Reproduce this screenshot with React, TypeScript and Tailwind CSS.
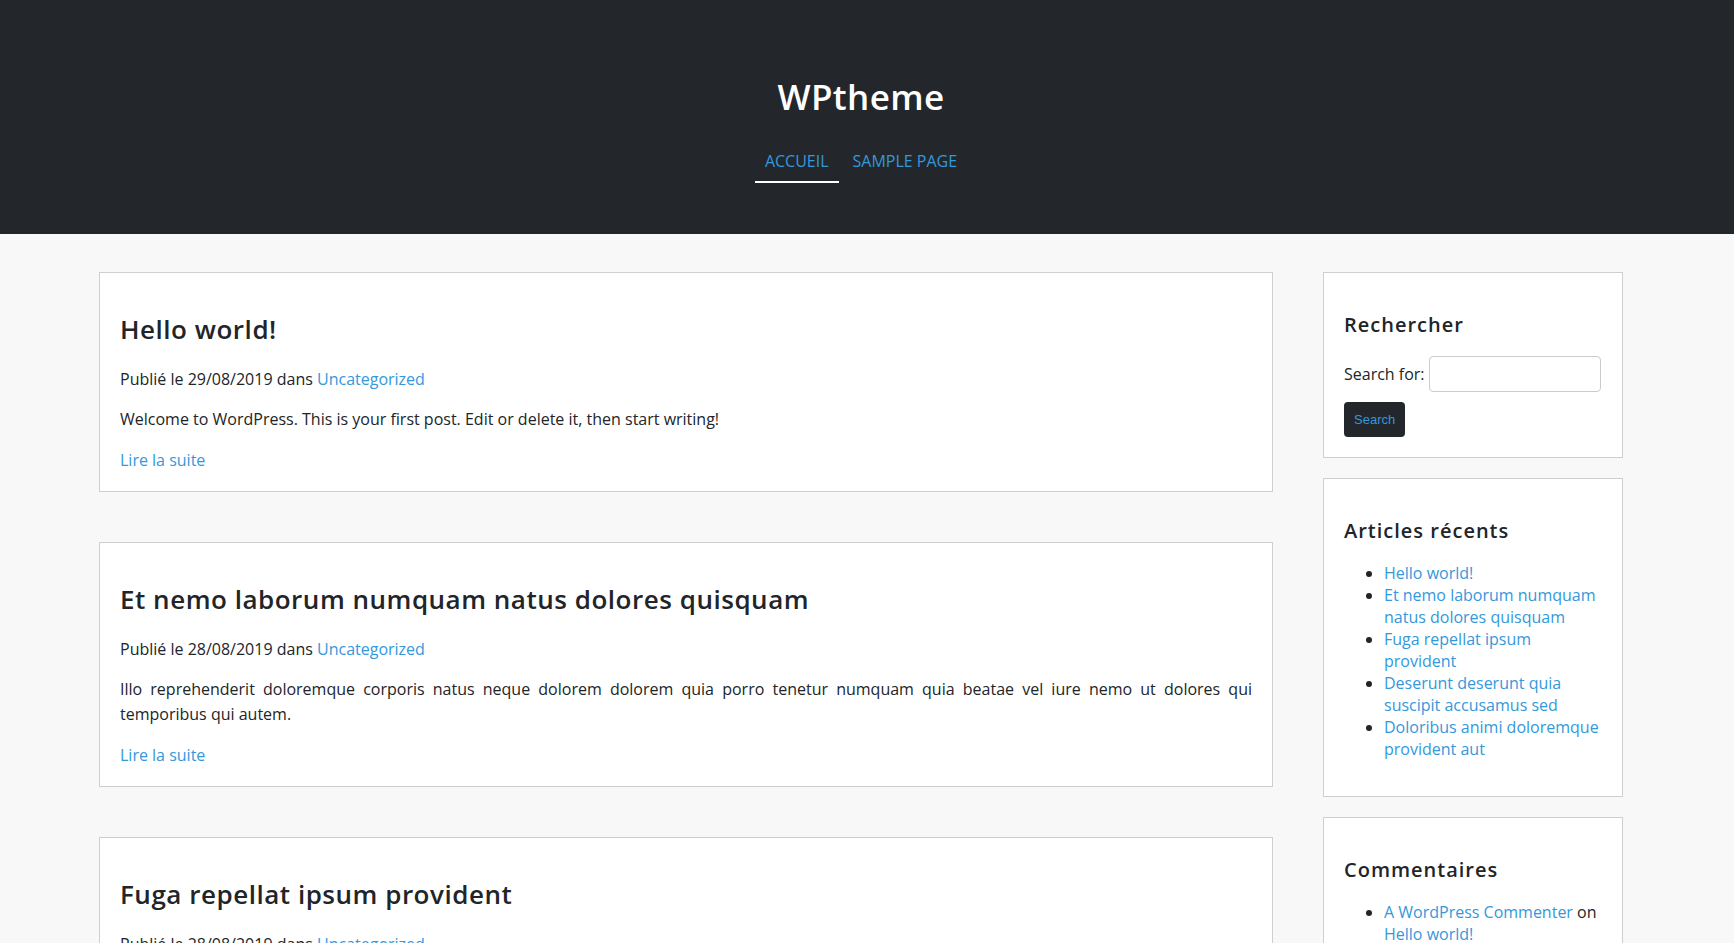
import React from "react";

type Post = {
  title: string;
  date: string;
  excerpt: string;
};

const posts: Post[] = [
  {
    title: "Hello world!",
    date: "29/08/2019",
    excerpt:
      "Welcome to WordPress. This is your first post. Edit or delete it, then start writing!",
  },
  {
    title: "Et nemo laborum numquam natus dolores quisquam",
    date: "28/08/2019",
    excerpt:
      "Illo reprehenderit doloremque corporis natus neque dolorem dolorem quia porro tenetur numquam quia beatae vel iure nemo ut dolores qui temporibus qui autem.",
  },
  {
    title: "Fuga repellat ipsum provident",
    date: "28/08/2019",
    excerpt:
      "Quae et aut rerum nobis saepe quia voluptatem. Ipsa eos sit eum ut aut est quia laboriosam.",
  },
];

const recent = [
  "Hello world!",
  "Et nemo laborum numquam natus dolores quisquam",
  "Fuga repellat ipsum provident",
  "Deserunt deserunt quia suscipit accusamus sed",
  "Doloribus animi doloremque provident aut",
];

const PostCard = ({ post }: { post: Post }) => {
  return (
    <article className="mb-[50px] border border-[#cfcfcf] bg-white px-5 pt-5 pb-[19px]">
      <h2 className="mt-[21px] mb-[22px] text-[26px] leading-[31px] font-semibold tracking-[0.02em] text-[#212529]">
        {post.title}
      </h2>
      <p className="mb-4">
        Publié le {post.date} dans{" "}
        <a href="#" className="text-[#3498db]">
          Uncategorized
        </a>
      </p>
      <p className="mb-4 text-justify leading-[25px]">{post.excerpt}</p>
      <p>
        <a href="#" className="text-[#3498db]">
          Lire la suite
        </a>
      </p>
    </article>
  );
};

const Widget = ({
  title,
  children,
}: {
  title: string;
  children: React.ReactNode;
}) => {
  return (
    <section className="mb-5 border border-[#cfcfcf] bg-white p-5">
      <h3 className="mt-5 mb-[19px] text-[20px] leading-6 font-semibold tracking-[0.05em] text-[#212529]">
        {title}
      </h3>
      {children}
    </section>
  );
};

const App = () => {
  return (
    <div className="min-h-screen bg-[#f8f8f8] font-['Open_Sans',sans-serif] text-base leading-6 text-[#212529]">
      <header className="bg-[#23272b]">
        <div className="flex w-[1722px] flex-col items-center pt-[75px] pb-[51px]">
          <h1 className="text-[35px] leading-[43px] font-semibold tracking-[0.01em] text-white">
            WPtheme
          </h1>
          <nav className="mt-[23px] flex gap-1">
            <a
              href="#"
              className="border-b-2 border-white px-[10px] pt-2 pb-2 text-[#3498db]"
            >
              ACCUEIL
            </a>
            <a
              href="#"
              className="border-b-2 border-transparent px-[10px] pt-2 pb-2 text-[#3498db]"
            >
              SAMPLE PAGE
            </a>
          </nav>
        </div>
      </header>

      <div className="ml-[99px] flex w-[1524px] gap-[50px] pt-[38px]">
        <main className="w-[1174px]">
          {posts.map((post) => (
            <PostCard key={post.title} post={post} />
          ))}
        </main>

        <aside className="w-[300px]">
          <Widget title="Rechercher">
            <form className="flex items-center gap-1">
              <label htmlFor="s">Search for:</label>
              <input
                id="s"
                type="text"
                className="h-9 w-[172px] rounded border border-[#cccccc] bg-white px-2"
              />
            </form>
            <button className="mt-[10px] h-[35px] rounded bg-[#23272b] px-[10px] font-['Liberation_Sans',Arial,sans-serif] text-[13px] text-[#3498db]">
              Search
            </button>
          </Widget>

          <Widget title="Articles récents">
            <ul className="mb-4 list-disc pl-10 leading-[22px]">
              {recent.map((item) => (
                <li key={item}>
                  <a href="#" className="text-[#3498db]">
                    {item}
                  </a>
                </li>
              ))}
            </ul>
          </Widget>

          <Widget title="Commentaires">
            <ul className="mb-4 list-disc pl-10 leading-[22px]">
              <li>
                <a href="#" className="text-[#3498db]">
                  A WordPress Commenter
                </a>{" "}
                on{" "}
                <a href="#" className="text-[#3498db]">
                  Hello world!
                </a>
              </li>
            </ul>
          </Widget>
        </aside>
      </div>
    </div>
  );
};

export default App;
